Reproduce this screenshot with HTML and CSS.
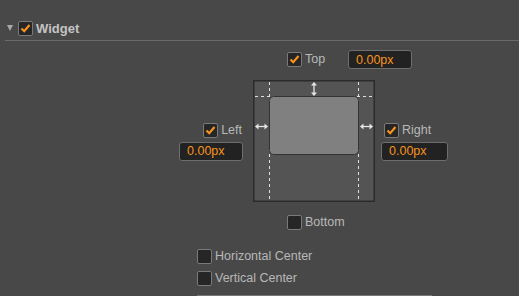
FILE: index.html
```html
<!DOCTYPE html>
<html lang="en">
<head>
  <meta charset="UTF-8">
  <title>Widget</title>
  <link rel="stylesheet" href="styles.css">
</head>
<body>

  <div class="panel">
    <div class="header">
      <svg class="fold" width="6" height="6" viewBox="0 0 6 6"><path d="M0 0 H6 L3 6 Z" fill="#a8a8a8"/></svg>
      <span class="check on">
        <svg width="13" height="13" viewBox="0 0 13 13"><path d="M2.5 6.5 L5.2 9.2 L10.5 3" fill="none" stroke="#f7931e" stroke-width="2.2"/></svg>
      </span>
      <span class="title">Widget</span>
    </div>

    <div class="layout">
      <div class="edge edge-top">
        <span class="check on">
          <svg width="13" height="13" viewBox="0 0 13 13"><path d="M2.5 6.5 L5.2 9.2 L10.5 3" fill="none" stroke="#f7931e" stroke-width="2.2"/></svg>
        </span>
        <span class="label wide">Top</span>
        <input class="field" type="text" value="0.00px">
      </div>

      <div class="edge edge-left">
        <div class="row">
          <span class="check on">
            <svg width="13" height="13" viewBox="0 0 13 13"><path d="M2.5 6.5 L5.2 9.2 L10.5 3" fill="none" stroke="#f7931e" stroke-width="2.2"/></svg>
          </span>
          <span class="label">Left</span>
        </div>
        <input class="field" type="text" value="0.00px">
      </div>

      <svg class="diagram" width="122" height="122" viewBox="0 0 122 122">
        <rect x="0.75" y="0.75" width="120.5" height="120.5" fill="#545454" stroke="#2b2b2b" stroke-width="1.5"/>
        <g stroke="#e0e0e0" stroke-width="1" stroke-dasharray="3 3">
          <line x1="16.5" y1="2" x2="16.5" y2="120"/>
          <line x1="105.5" y1="2" x2="105.5" y2="120"/>
          <line x1="2" y1="16.5" x2="120" y2="16.5"/>
        </g>
        <rect x="16.5" y="16.5" width="89" height="58" rx="4" fill="#808080" stroke="#333" stroke-width="1"/>
        <g stroke="#e6e6e6" stroke-width="1.3" fill="#e6e6e6">
          <line x1="61" y1="5" x2="61" y2="13"/>
          <path d="M58 5.5 L61 2 L64 5.5 Z" stroke="none"/>
          <path d="M58 12.5 L61 16 L64 12.5 Z" stroke="none"/>
          <line x1="5" y1="46.5" x2="12" y2="46.5"/>
          <path d="M5.5 43.5 L2 46.5 L5.5 49.5 Z" stroke="none"/>
          <path d="M11.5 43.5 L15 46.5 L11.5 49.5 Z" stroke="none"/>
          <line x1="110" y1="46.5" x2="117" y2="46.5"/>
          <path d="M110.5 43.5 L107 46.5 L110.5 49.5 Z" stroke="none"/>
          <path d="M116.5 43.5 L120 46.5 L116.5 49.5 Z" stroke="none"/>
        </g>
      </svg>

      <div class="edge edge-right">
        <div class="row">
          <span class="check on">
            <svg width="13" height="13" viewBox="0 0 13 13"><path d="M2.5 6.5 L5.2 9.2 L10.5 3" fill="none" stroke="#f7931e" stroke-width="2.2"/></svg>
          </span>
          <span class="label">Right</span>
        </div>
        <input class="field wide-field" type="text" value="0.00px">
      </div>

      <div class="edge edge-bottom">
        <span class="check"></span>
        <span class="label">Bottom</span>
      </div>
    </div>

    <div class="options">
      <div class="row">
        <span class="check"></span>
        <span class="label">Horizontal Center</span>
      </div>
      <div class="row">
        <span class="check"></span>
        <span class="label">Vertical Center</span>
      </div>
      <div class="rule"></div>
    </div>
  </div>

</body>
</html>
```

FILE: styles.css
```css
body {
  margin: 0;
  background: #484848;
  font-family: "Liberation Sans", Arial, sans-serif;
  font-size: 12.5px;
  color: #b8b8b8;
}
.panel {
  width: 519px;
  height: 296px;
  overflow: hidden;
}
.header {
  display: flex;
  align-items: center;
  height: 41px;
  margin-left: 5px;
  padding-top: 16px;
  box-sizing: border-box;
  border-bottom: 1px solid #6a6a6a;
}
.fold {
  margin-left: 2px;
  margin-right: 5px;
}
.title {
  font-weight: bold;
  font-size: 13px;
  color: #c4c4c4;
  margin-left: 3px;
}
.check {
  display: inline-flex;
  align-items: center;
  justify-content: center;
  width: 15px;
  height: 15px;
  box-sizing: border-box;
  border: 1px solid #7a7a7a;
  border-radius: 2px;
  background: #262626;
  flex-shrink: 0;
}
.label {
  margin-left: 3px;
  line-height: 15px;
}
.label.wide {
  min-width: 43px;
}
.row {
  display: flex;
  align-items: center;
}
.field {
  width: 64px;
  height: 19px;
  box-sizing: border-box;
  border: 1px solid #6e6e6e;
  border-radius: 3px;
  background: #222;
  color: #f7931e;
  font-family: "Liberation Sans", Arial, sans-serif;
  font-size: 12.5px;
  padding: 0 0 0 7px;
  margin: 0;
  outline: none;
}
.wide-field {
  width: 67px;
}
.layout {
  display: grid;
  grid-template-columns: 74px 122px auto;
  grid-template-rows: 19px 122px 15px;
  row-gap: 11px;
  margin-top: 9px;
  padding-left: 179px;
}
.edge-top {
  grid-column: 2 / 4;
  grid-row: 1;
  display: flex;
  align-items: center;
  padding-left: 34px;
}
.edge-left {
  grid-column: 1;
  grid-row: 2;
  align-self: center;
  display: flex;
  flex-direction: column;
  align-items: flex-end;
  gap: 4px;
  padding-right: 10px;
  margin-top: 1px;
}
.edge-left .label {
  margin-right: 1px;
}
.diagram {
  grid-column: 2;
  grid-row: 2;
  display: block;
}
.edge-right {
  grid-column: 3;
  grid-row: 2;
  align-self: center;
  display: flex;
  flex-direction: column;
  align-items: flex-start;
  gap: 4px;
  padding-left: 6px;
  margin-top: 1px;
}
.edge-right .row {
  padding-left: 3px;
}
.edge-bottom {
  grid-column: 2 / 4;
  grid-row: 3;
  display: flex;
  align-items: center;
  padding-left: 34px;
  margin-top: 3px;
}
.options {
  display: flex;
  flex-direction: column;
  gap: 7px;
  margin-top: 21px;
  padding-left: 197px;
}
.rule {
  width: 235px;
  height: 1px;
  background: #777;
  margin-top: 2px;
}
```
